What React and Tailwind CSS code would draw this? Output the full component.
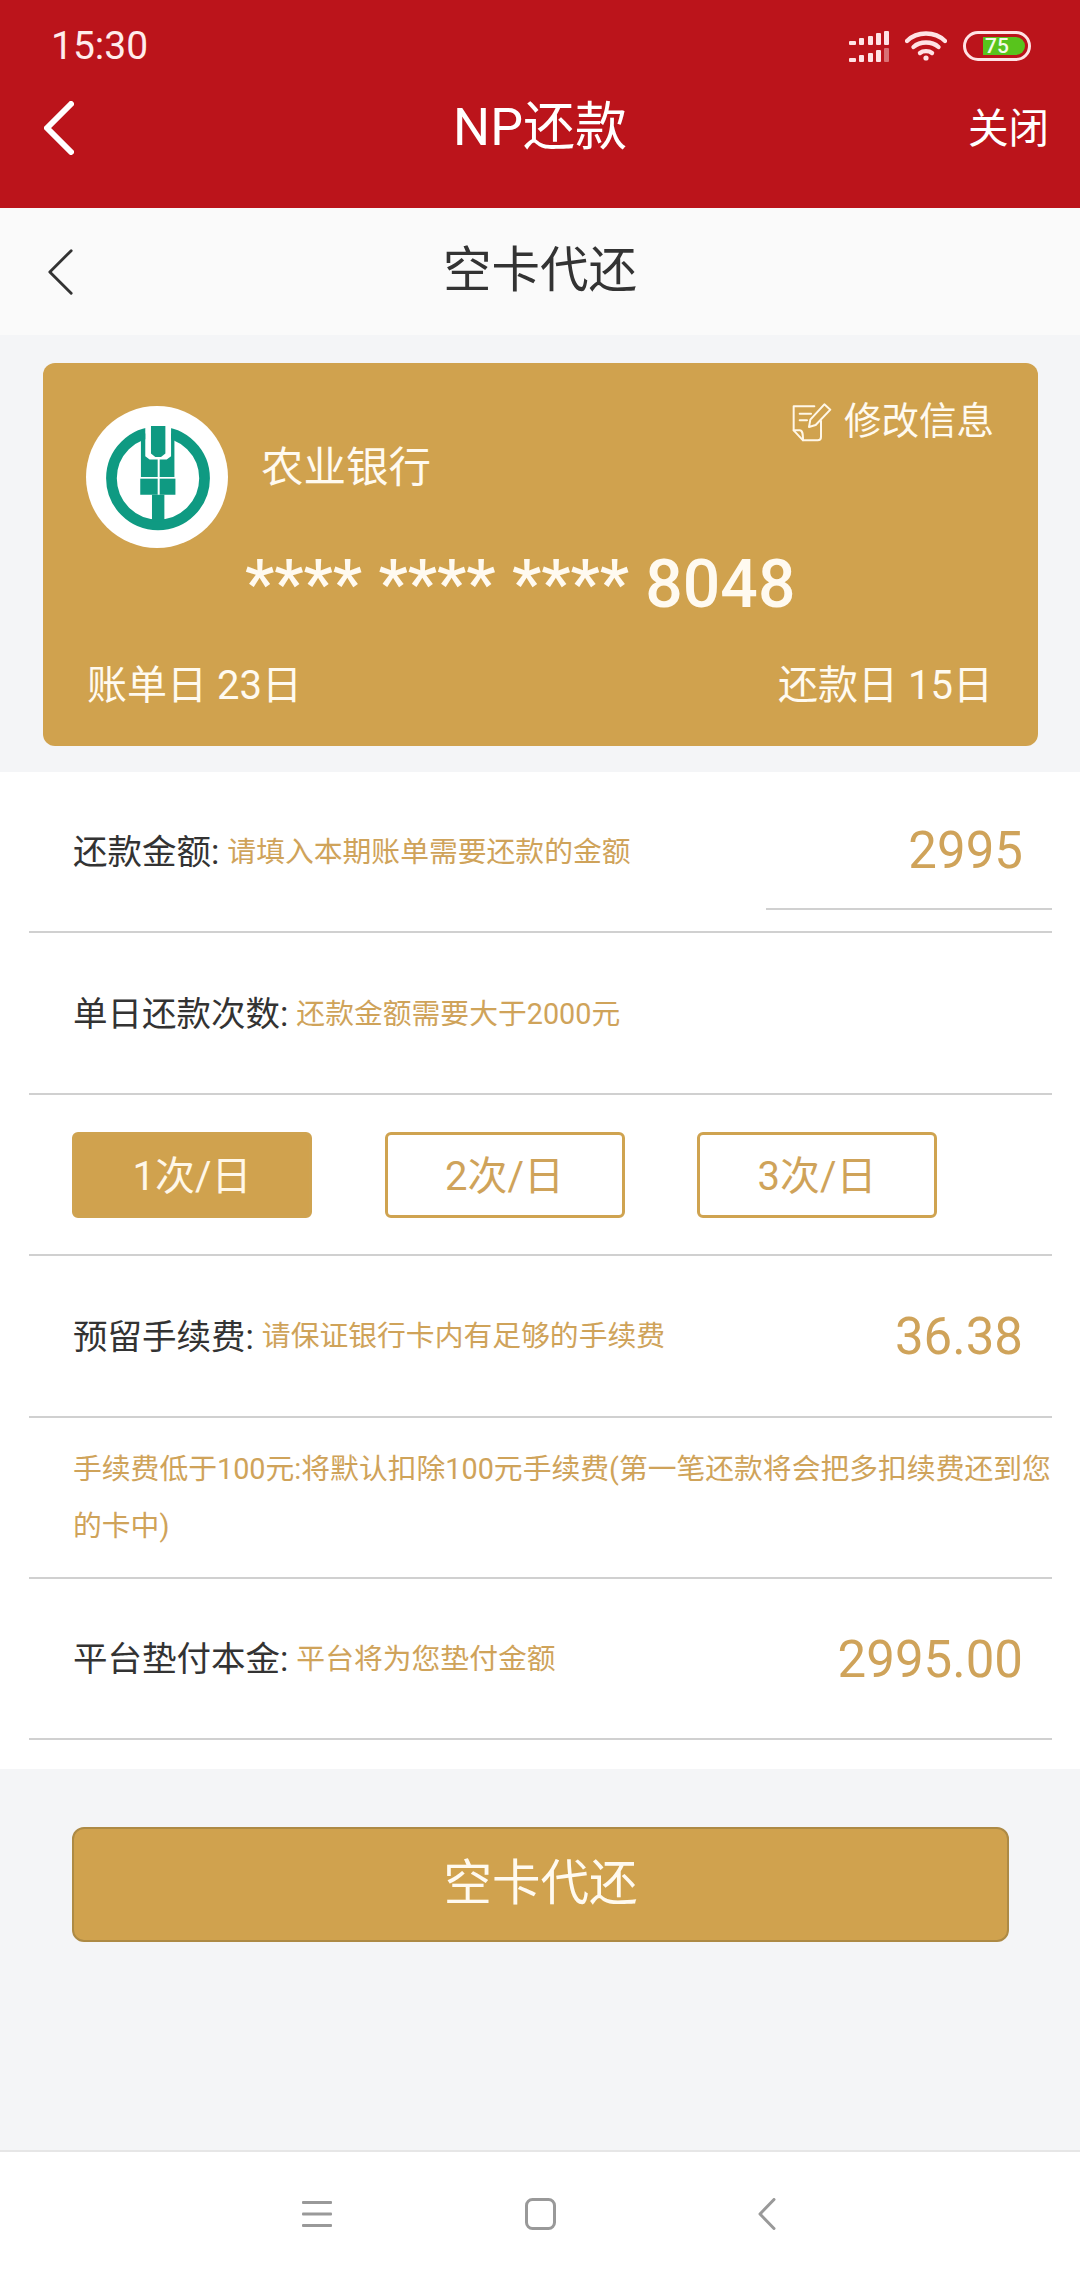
const FONT = "font-['Roboto','Noto_Sans_CJK_SC',sans-serif]";

function Chevron({ className, width = 6 }) {
  return (
    <svg viewBox="0 0 30 54" className={className} fill="none" stroke="currentColor" strokeWidth={width} strokeLinecap="round" strokeLinejoin="round">
      <path d="M27 3 L3 27 L27 51" />
    </svg>
  );
}

function Signal() {
  const upper = [[1, 10, 7, 4], [11, 7, 5, 7], [20, 5, 5, 9], [28, 2, 5, 12], [36, 0, 5, 14]];
  const lower = [[1, 27, 7, 4], [11, 24, 5, 7], [20, 22, 5, 9], [28, 19, 5, 12]];
  return (
    <svg viewBox="0 0 41 31" className="h-[31px] w-[41px]" fill="#ffe3e5">
      {upper.concat(lower).map(([x, y, w, h], i) => (
        <rect key={i} x={x} y={y} width={w} height={h} rx="1" />
      ))}
      <rect x="36" y="17" width="5" height="14" rx="1" fillOpacity="0.45" />
    </svg>
  );
}

function Wifi() {
  return (
    <svg viewBox="0 0 42 30" className="h-[30px] w-[42px]" fill="none" stroke="#ffe3e5" strokeWidth="4.4" strokeLinecap="round">
      <path d="M2 10 C12 0 30 0 40 10" />
      <path d="M8.5 16 C15 10 27 10 33.5 16" />
      <path d="M15 22 C18 19.5 24 19.5 27 22" />
      <circle cx="21" cy="27" r="2.6" fill="#ffe3e5" stroke="none" />
    </svg>
  );
}

function BankLogo() {
  const green = "#0f9a82";
  return (
    <div className="h-[142px] w-[142px] shrink-0 rounded-full bg-white">
      <svg viewBox="48 48 424 424" className="h-full w-full">
        <circle cx="263" cy="264" r="139" fill="none" stroke={green} strokeWidth="32" />
        <rect x="225" y="90" width="77" height="120" fill="#ffffff" />
        <path d="M242 108 H285 V190 L272 200 H255 L242 190 Z" fill={green} />
        <path d="M212 130 H225 V198 L238 208 H262 V260 H212 Z" fill={green} />
        <path d="M312 130 H302 V198 L289 208 H268 V260 H312 Z" fill={green} />
        <rect x="210" y="265" width="52" height="48" fill={green} />
        <rect x="268" y="265" width="47" height="48" fill={green} />
        <rect x="245" y="313" width="37" height="80" fill={green} />
      </svg>
    </div>
  );
}

function EditIcon() {
  return (
    <svg viewBox="45 55 120 120" className="h-[40px] w-[40px] shrink-0" fill="none" stroke="#fff7e8" strokeWidth="6" strokeLinejoin="round" strokeLinecap="round">
      <path d="M112 68 H50 V140 L78 170 H122 C128 170 132 166 132 160 V112" />
      <path d="M50 140 H68 C76 140 78 148 78 170" />
      <path d="M68 90 H102 M68 110 H90" />
      <path d="M142 62 L160 78 L116 124 L96 130 L100 108 Z" />
    </svg>
  );
}

function Label({ title, hint }) {
  return (
    <div className="flex items-center pl-[44px]">
      <span className="text-[34.5px] leading-none text-[#333333]">{title}:</span>
      <span className="ml-[8px] text-[28.8px] leading-none text-[#cfa35a]">{hint}</span>
    </div>
  );
}

function Row({ children, className = "" }) {
  return (
    <div className={"mr-[28px] ml-[29px] flex h-[161.4px] items-center justify-between border-b-2 border-[#d0d0d0] pt-[2px] " + className}>
      {children}
    </div>
  );
}

function Value({ children }) {
  return <span className="pr-[29px] text-[51px] leading-none text-[#cfa35a]">{children}</span>;
}

function Choice({ children, active }) {
  return (
    <div
      className={
        "flex h-[86px] w-[240px] items-center justify-center rounded-[6px] border-[3px] border-[#cfa350] pt-[3px] text-[40px] leading-none " +
        (active ? "bg-[#d0a24e] text-[#fff7e8]" : "text-[#cfa35a]")
      }
    >
      {children}
    </div>
  );
}

export default function App() {
  return (
    <div className={"flex h-[2280px] w-[1080px] flex-col overflow-hidden bg-[#f4f5f7] " + FONT}>
      <header className="h-[208px] bg-[#bb141b] text-white">
        <div className="flex h-[92px] items-center pr-[49px] pl-[51px]">
          <span className="text-[39px] leading-none text-[#ffecec]">15:30</span>
          <div className="ml-auto flex items-center gap-[16px]">
            <Signal />
            <Wifi />
            <div className="flex h-[30px] w-[68px] items-center justify-end rounded-full border-[3px] border-[#ffe3e5] pr-[3px]">
              <div className="flex h-[18px] w-[42px] items-center rounded-r-full bg-[#58c41c] pl-[2px] text-[21px] leading-none font-medium text-[#f4fbe9]">
                75
              </div>
            </div>
          </div>
        </div>
        <div className="grid h-[72px] grid-cols-[1fr_auto_1fr] items-center px-[44px]">
          <Chevron className="h-[54px] w-[30px]" />
          <span className="text-[52px] leading-none">NP还款</span>
          <span className="-mr-[13px] justify-self-end pt-[3px] text-[40.5px] leading-none">关闭</span>
        </div>
      </header>

      <div className="grid h-[127px] grid-cols-[1fr_auto_1fr] items-center bg-[#fafafa] px-[47px] text-[#333333]">
        <Chevron className="h-[48px] w-[27px]" width={3.2} />
        <span className="text-[48.5px] leading-none">空卡代还</span>
      </div>

      <section className="mt-[28px] mr-[42px] ml-[43px] h-[383px] rounded-[12px] bg-[#d0a24e] text-[#fffaf0]">
        <div className="flex items-start pt-[43px] pl-[43px]">
          <BankLogo />
          <span className="mt-[41px] ml-[33px] text-[42.5px] leading-none">农业银行</span>
          <div className="-mt-[4px] mr-[44px] ml-auto flex items-center gap-[12px]">
            <EditIcon />
            <span className="text-[37.5px] leading-none">修改信息</span>
          </div>
        </div>
        <div className="mt-[2px] ml-[202px] flex h-[70px] items-center text-[66px] leading-none font-medium whitespace-pre">
          **** **** **** 8048
        </div>
        <div className="mt-[46px] flex justify-between pr-[45px] pl-[44px] text-[40px] leading-none">
          <span>账单日 23日</span>
          <span>还款日 15日</span>
        </div>
      </section>

      <main className="mt-[26px] h-[997px] bg-white">
        <Row>
          <Label title="还款金额" hint="请填入本期账单需要还款的金额" />
          <div className="-mt-[2px] flex h-[138px] w-[286px] items-center justify-end self-start border-b-2 border-[#d0d0d0] pt-[20px]">
            <Value>2995</Value>
          </div>
        </Row>
        <Row>
          <Label title="单日还款次数" hint="还款金额需要大于2000元" />
        </Row>
        <Row className="pr-[115px] pl-[43px]">
          <Choice active>1次/日</Choice>
          <Choice>2次/日</Choice>
          <Choice>3次/日</Choice>
        </Row>
        <Row>
          <Label title="预留手续费" hint="请保证银行卡内有足够的手续费" />
          <Value>36.38</Value>
        </Row>
        <Row>
          <p className="pl-[44px] text-[28.8px] leading-[57px] text-[#cfa35a]">
            手续费低于100元:将默认扣除100元手续费(第一笔还款将会把多扣续费还到您的卡中)
          </p>
        </Row>
        <Row>
          <Label title="平台垫付本金" hint="平台将为您垫付金额" />
          <Value>2995.00</Value>
        </Row>
      </main>

      <div className="mt-[58px] mr-[71px] ml-[72px] flex h-[115px] items-center justify-center rounded-[12px] border-2 border-[#ad8a45] bg-[#d0a24e] text-[48.5px] leading-none text-[#fffaf0]">
        空卡代还
      </div>

      <div className="flex-1" />

      <nav className="flex h-[130px] items-start justify-center border-t-2 border-[#e6e6e6] bg-white pt-[46px] pr-[2px] text-[#999999]">
        <svg viewBox="0 0 30 32" className="h-[32px] w-[30px]" fill="currentColor">
          <rect x="0" y="3" width="30" height="3" rx="1" />
          <rect x="0" y="14.5" width="30" height="3" rx="1" />
          <rect x="0" y="26" width="30" height="3" rx="1" />
        </svg>
        <svg viewBox="0 0 31 32" className="ml-[193px] h-[32px] w-[31px]" fill="none" stroke="currentColor" strokeWidth="3">
          <rect x="1.5" y="1.5" width="28" height="29" rx="6" />
        </svg>
        <svg viewBox="0 0 18 32" className="ml-[202px] h-[32px] w-[18px]" fill="none" stroke="currentColor" strokeWidth="3" strokeLinecap="round" strokeLinejoin="round">
          <path d="M16 1.5 L2 16 L16 30.5" />
        </svg>
      </nav>
    </div>
  );
}
